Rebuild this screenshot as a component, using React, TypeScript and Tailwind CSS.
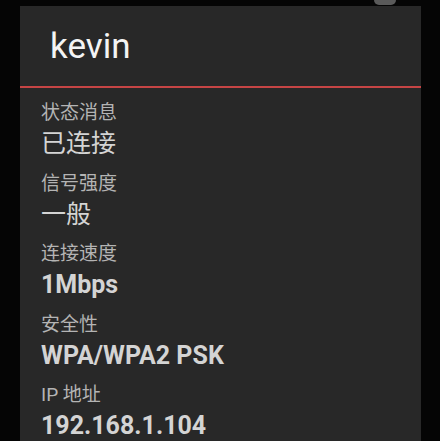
import React from 'react';

const rows = [
  { label: '状态消息', value: '已连接', bold: false },
  { label: '信号强度', value: '一般', bold: false },
  { label: '连接速度', value: '1Mbps', bold: true },
  { label: '安全性', value: 'WPA/WPA2 PSK', bold: true },
  { label: 'IP 地址', value: '192.168.1.104', bold: true },
];

const font = { fontFamily: 'Roboto, "Noto Sans CJK SC", sans-serif' };

export default function App() {
  return (
    <div className="relative h-[441px] w-[440px] overflow-hidden bg-[#050505]" style={font}>
      {/* partial icon peeking over the dialog */}
      <div className="absolute left-[374px] top-[-5px] h-[10px] w-[22px] rounded-full bg-[#5a5a5a]" />

      <div className="ml-[20px] mt-[6px] h-[435px] w-[401px] bg-[#282828]">
        {/* ── Title ─────────────────────────────── */}
        <div className="flex h-[80px] items-center pl-[30px] pt-[2px] text-[35px] text-[#f4f4f4]">
          kevin
        </div>
        <div className="h-[2px] bg-[#c64545]" />

        {/* ── Details ───────────────────────────── */}
        <div className="flex flex-col gap-[10.5px] pl-[21px] pt-[13px]">
          {rows.map((row) => (
            <div key={row.label} className="flex flex-col">
              <span className="text-[19px] leading-[24px] text-[#b4b4b4]">{row.label}</span>
              <span
                className={
                  row.bold
                    ? 'pt-[2px] text-[25px] font-bold leading-[34px] text-[#d4d4d4]'
                    : 'pt-[2px] text-[25px] leading-[34px] text-[#d4d4d4]'
                }
              >
                {row.value}
              </span>
            </div>
          ))}
        </div>
      </div>
    </div>
  );
}
